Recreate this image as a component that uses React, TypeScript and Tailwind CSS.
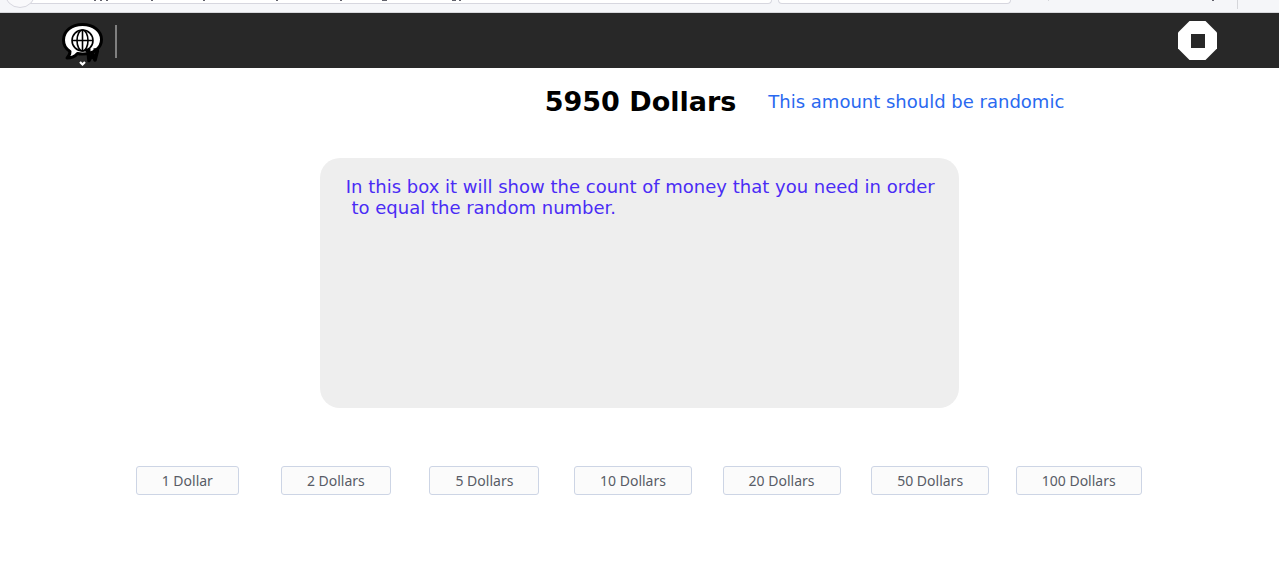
const amounts = [1, 2, 5, 10, 20, 50, 100];

function ChatGlobeLogo() {
  return (
    <svg width="44" height="51" viewBox="0 0 44 51" fill="none" aria-hidden="true">
      <path
        d="M22.500 8.500C11.500 8.500 3.500 15 3.500 24c0 5 2.500 9 6.500 11.500 0 3-1 4.500-3 6.500 4.500 0 8.500-2 10.500-4.500 1.600.4 3.400.5 5 .5 11 0 19-6 19-14.500S33.500 8.500 22.500 8.500Z"
        fill="#fff"
        stroke="#000"
        strokeWidth="3"
        strokeLinejoin="round"
      />
      <g stroke="#000" strokeWidth="1.600">
        <circle cx="22.500" cy="24.500" r="10.500" />
        <ellipse cx="22.500" cy="24.500" rx="5.500" ry="10.500" />
        <path d="M22.500 14v21M12 24.500h21" />
      </g>
      <path d="M25.500 34.500h5M33.500 34h5.500M28 35l1 9.500 3.500-6.500 2.500 6 2.500-9.500" stroke="#000" strokeWidth="3.500" strokeLinejoin="round" />
      <path d="m20 46 2.500 2.500L25 46" stroke="#fff" strokeWidth="2.200" />
    </svg>
  );
}

function ToolbarMarks() {
  return (
    <svg className="absolute top-0 left-0" width="1279" height="12" viewBox="0 0 1279 12" aria-hidden="true">
      <path
        d="M94 0h2v1h-2zM100 0h2v1h-2zM106 0h2v1h-2zM151 0h2v1h-2zM203 0h2v1h-2zM276 0h2v1h-2zM340 0h2v1h-2zM382 0h5v1h-5zM452 0h4v1h-4zM459 0h2v1h-2zM1212 0h2v1h-2z"
        fill="#62626c"
      />
      <path d="M1237 0h1v9h-1zM1048 0h1v1h-1z" fill="#d5d6da" />
    </svg>
  );
}

export default function App() {
  return (
    <div className="min-h-screen bg-white font-['DejaVu_Sans',sans-serif] text-black">
      <div className="relative flex h-[13px] items-start gap-[6px] overflow-hidden border-b border-[#d7d8dc] bg-[#f5f6f9] pl-5">
        <div className="h-1 w-[752px] rounded-b-sm border border-t-0 border-[#d7d7df] bg-white" />
        <div className="h-1 w-[233px] rounded-b-sm border border-t-0 border-[#d7d7df] bg-white" />
        <div className="absolute -top-6 left-1 size-8 rounded-full border border-[#d7d7df] bg-[#f9f9fb]" />
        <ToolbarMarks />
      </div>

      <header className="flex h-[55px] items-center justify-between bg-[#282828] pr-[62px] pl-[60px]">
        <div className="flex items-center gap-[11px] pt-[2px]">
          <button type="button" aria-label="Language">
            <ChatGlobeLogo />
          </button>
          <div className="h-[33px] w-[2px] bg-[#808080]" />
        </div>
        <button type="button" aria-label="Stop">
          <svg width="39" height="39" viewBox="0 0 39 39" aria-hidden="true">
            <path d="M11.500 0h16L39 11.500v16L27.500 39h-16L0 27.500v-16Z" fill="#fff" />
            <path d="M13 13h14v14H13Z" fill="#282828" />
          </svg>
        </button>
      </header>

      <main>
        <div className="grid grid-cols-[1fr_auto_1fr] items-center gap-8 pt-[18px] pl-[2px]">
          <h1 className="col-start-2 text-[27px] leading-8 font-bold">5950 Dollars</h1>
          <p className="text-[18px] leading-8 text-[#2a69f0]">This amount should be randomic</p>
        </div>

        <section className="mx-auto mt-10 min-h-[250px] w-1/2 rounded-[20px] bg-[#eeeeee] px-[26px] pt-[18px] text-[18px] leading-[21px] text-[#4a2cf5]">
          <p className="whitespace-pre">{"In this box it will show the count of money that you need in order\n to equal the random number."}</p>
        </section>

        <div className="mt-[58px] grid grid-cols-7 justify-items-center pr-[126px] pl-[113px]">
          {amounts.map((amount) => (
            <button
              key={amount}
              type="button"
              className="rounded-[3px] border border-[#cdd5e5] bg-[#fbfbfb] px-[25px] text-[14px] leading-[27px] font-['Noto_Sans',sans-serif] text-[#585c66]"
            >
              {amount} {amount === 1 ? "Dollar" : "Dollars"}
            </button>
          ))}
        </div>
      </main>
    </div>
  );
}
